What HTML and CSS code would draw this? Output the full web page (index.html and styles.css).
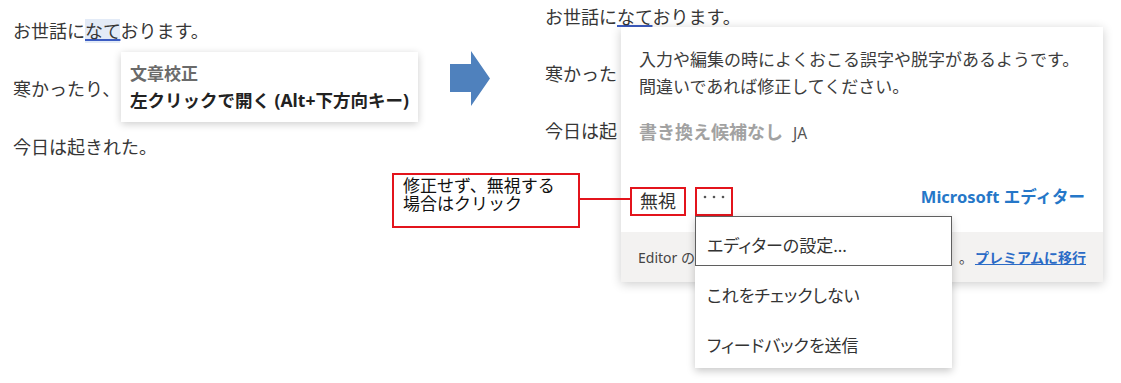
FILE: index.html
```html
<!DOCTYPE html>
<html lang="ja">
<head>
<meta charset="utf-8">
<title>文章校正</title>
<link rel="stylesheet" href="styles.css">
</head>
<body>
<div class="stage">
  <section class="pane pane-before">
    <p class="doc-line">お世話に<span class="flag flag-hover">なて</span>おります。</p>
    <p class="doc-line">寒かったり、</p>
    <p class="doc-line">今日は起きれた。</p>
    <div class="tooltip">
      <div class="tooltip-title">文章校正</div>
      <div class="tooltip-hint">左クリックで開く (Alt+下方向キー)</div>
    </div>
  </section>

  <div class="arrow">
    <svg width="40" height="55" viewBox="0 0 40 55"><polygon points="0,13 21,13 21,0 40,27.5 21,55 21,41 0,41" fill="#4f81bd"/></svg>
  </div>

  <section class="pane pane-after">
    <p class="doc-line">お世話に<span class="flag">なて</span>おります。</p>
    <p class="doc-line">寒かった</p>
    <p class="doc-line">今日は起</p>

    <div class="card">
      <div class="card-body">
        <p class="message">入力や編集の時によくおこる誤字や脱字があるようです。<br>間違いであれば修正してください。</p>
        <p class="suggest"><span class="suggest-none">書き換え候補なし</span><span class="lang">JA</span></p>
        <div class="actions">
          <span class="ignore">無視</span>
          <span class="more">
            <svg width="22" height="4" viewBox="0 0 22 4"><circle cx="2" cy="2" r="1.3" fill="#555"/><circle cx="11" cy="2" r="1.3" fill="#555"/><circle cx="20" cy="2" r="1.3" fill="#555"/></svg>
            <ul class="menu">
              <li class="menu-item menu-item-focus">エディターの設定...</li>
              <li class="menu-item">これをチェックしない</li>
              <li class="menu-item">フィードバックを送信</li>
            </ul>
          </span>
          <span class="brand">Microsoft エディター</span>
        </div>
      </div>
      <div class="card-footer">
        <span class="footer-text">Editor の</span>
        <span class="footer-end">。</span>
        <span class="premium">プレミアムに移行</span>
      </div>
    </div>
  </section>

  <div class="callout">修正せず、無視する<br>場合はクリック</div>
</div>
</body>
</html>
```
FILE: styles.css
```css
* { box-sizing: border-box; }
html, body { margin: 0; padding: 0; background: #fff; }
body {
  font-family: "Noto Sans", "Noto Sans CJK JP", sans-serif;
  color: #333;
}
.stage {
  position: relative;
  display: flex;
  width: 1121px;
  height: 383px;
  overflow: hidden;
}
.pane { position: relative; }
.pane-before {
  width: 450px;
  padding: 14px 0 0 13px;
}
.pane-after {
  flex: 1;
  padding: 0 0 0 55px;
}
.doc-line {
  margin: 0 0 24px;
  font-size: 18px;
  line-height: 34px;
  white-space: nowrap;
  color: #363636;
}
.pane-after .doc-line { margin-bottom: 23px; }
.flag {
  text-decoration: underline;
  text-decoration-color: #3b5cc2;
  text-decoration-thickness: 2px;
  text-underline-offset: 1px;
}
.flag-hover { background: #e3ebf7; }

.tooltip {
  position: absolute;
  left: 121px;
  top: 52px;
  width: 297px;
  height: 70px;
  background: #fff;
  box-shadow: 0 2px 8px rgba(0,0,0,0.2);
  padding: 9px 0 0 9px;
  font-size: 17.5px;
  line-height: 26px;
  font-weight: 700;
  white-space: nowrap;
}
.tooltip-title { color: #6a6a6a; font-size: 17px; }
.tooltip-hint { color: #222; }

.arrow {
  width: 40px;
  padding-top: 51px;
}
.arrow svg { display: block; }

.card {
  position: absolute;
  left: 131px;
  top: 27px;
  width: 482px;
  height: 255px;
  background: #fff;
  box-shadow: 0 2px 10px rgba(0,0,0,0.2);
  display: flex;
  flex-direction: column;
  z-index: 2;
}
.card-body { padding: 19px 18px 0 18px; }
.message {
  margin: 0;
  font-size: 17px;
  line-height: 27px;
  color: #3c3c3c;
  white-space: nowrap;
}
.suggest {
  margin: 19px 0 0;
  line-height: 27px;
  white-space: nowrap;
}
.suggest-none {
  font-size: 18px;
  font-weight: 700;
  color: #a2a2a2;
}
.lang {
  margin-left: 10px;
  font-size: 15.5px;
  color: #555;
}
.actions {
  margin-top: 40px;
  display: flex;
  align-items: flex-start;
  margin-left: -9px;
}
.ignore {
  border: 2px solid #e3141c;
  padding: 0 8px;
  font-size: 18px;
  line-height: 25px;
  color: #333;
}
.more {
  position: relative;
  margin-left: 9px;
  width: 38px;
  height: 29px;
  border: 2px solid #e3141c;
  padding: 6px 0 0 6px;
}
.more svg { display: block; }
.brand {
  margin-left: auto;
  font-size: 16.5px;
  line-height: 20px;
  font-weight: 700;
  color: #2577c8;
}
.card-footer {
  margin-top: auto;
  height: 50px;
  background: #f3f2f1;
  display: flex;
  align-items: center;
  padding: 0 17px;
  white-space: nowrap;
}
.footer-text {
  font-size: 14px;
  color: #444;
}
.footer-end {
  margin-left: auto;
  font-size: 14px;
  color: #444;
}
.premium {
  margin-left: 2px;
  font-size: 14px;
  font-weight: 700;
  color: #2b6bc6;
  text-decoration: underline;
}

.menu {
  position: absolute;
  left: -2px;
  top: calc(100% + 2px);
  width: 257px;
  margin: 0;
  padding: 0 0 2px;
  list-style: none;
  background: #fff;
  box-shadow: 0 3px 8px rgba(0,0,0,0.22);
  z-index: 3;
}
.menu-item {
  height: 50px;
  display: flex;
  align-items: center;
  padding: 6px 0 0 12px;
  font-size: 17px;
  font-feature-settings: "palt";
  color: #333;
  white-space: nowrap;
}
.menu-item-focus { border: 1px solid #5f5f5f; padding-left: 11px; }

.callout {
  position: absolute;
  left: 392px;
  top: 173px;
  width: 188px;
  height: 55px;
  border: 2px solid #e3141c;
  background: #fff;
  padding: 2px 0 0 9px;
  font-size: 17px;
  line-height: 18px;
  color: #111;
  white-space: nowrap;
  z-index: 4;
}
.callout::after {
  content: "";
  position: absolute;
  left: calc(100% + 2px);
  top: 23px;
  width: 50px;
  height: 2px;
  background: #e3141c;
}
```
